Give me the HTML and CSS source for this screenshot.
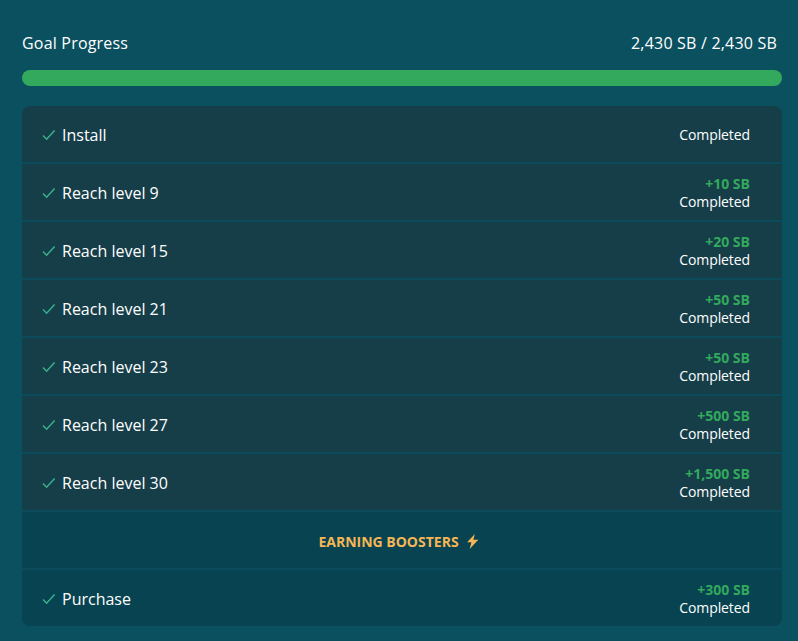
FILE: index.html
```html
<!DOCTYPE html>
<html lang="en">
<head>
    <meta charset="UTF-8">
    <title>Goal Progress</title>
    <link rel="stylesheet" href="styles.css">
</head>
<body>
    <div class="goal-header">
        <span>Goal Progress</span>
        <span>2,430 SB / 2,430 SB</span>
    </div>
    <div class="progress"><div class="progress-fill"></div></div>
    <div class="goal-list">
        <div class="goal-row">
            <div class="goal-name"><svg class="check" viewBox="0 0 14 12"><path d="M1 6.5 L4.6 10.2 L12.6 1.4"/></svg>Install</div>
            <div class="goal-status">Completed</div>
        </div>
        <div class="goal-row">
            <div class="goal-name"><svg class="check" viewBox="0 0 14 12"><path d="M1 6.5 L4.6 10.2 L12.6 1.4"/></svg>Reach level 9</div>
            <div class="goal-status"><div class="reward">+10 SB</div>Completed</div>
        </div>
        <div class="goal-row">
            <div class="goal-name"><svg class="check" viewBox="0 0 14 12"><path d="M1 6.5 L4.6 10.2 L12.6 1.4"/></svg>Reach level 15</div>
            <div class="goal-status"><div class="reward">+20 SB</div>Completed</div>
        </div>
        <div class="goal-row">
            <div class="goal-name"><svg class="check" viewBox="0 0 14 12"><path d="M1 6.5 L4.6 10.2 L12.6 1.4"/></svg>Reach level 21</div>
            <div class="goal-status"><div class="reward">+50 SB</div>Completed</div>
        </div>
        <div class="goal-row">
            <div class="goal-name"><svg class="check" viewBox="0 0 14 12"><path d="M1 6.5 L4.6 10.2 L12.6 1.4"/></svg>Reach level 23</div>
            <div class="goal-status"><div class="reward">+50 SB</div>Completed</div>
        </div>
        <div class="goal-row">
            <div class="goal-name"><svg class="check" viewBox="0 0 14 12"><path d="M1 6.5 L4.6 10.2 L12.6 1.4"/></svg>Reach level 27</div>
            <div class="goal-status"><div class="reward">+500 SB</div>Completed</div>
        </div>
        <div class="goal-row">
            <div class="goal-name"><svg class="check" viewBox="0 0 14 12"><path d="M1 6.5 L4.6 10.2 L12.6 1.4"/></svg>Reach level 30</div>
            <div class="goal-status"><div class="reward">+1,500 SB</div>Completed</div>
        </div>
        <div class="boosters">
            <span>EARNING BOOSTERS</span>
            <svg class="bolt" viewBox="0 0 12 14"><path d="M8.2 0 L1 7.6 L5 7.6 L3.4 14 L11.4 5.4 L6.8 5.4 Z"/></svg>
        </div>
        <div class="goal-row extra">
            <div class="goal-name"><svg class="check" viewBox="0 0 14 12"><path d="M1 6.5 L4.6 10.2 L12.6 1.4"/></svg>Purchase</div>
            <div class="goal-status"><div class="reward">+300 SB</div>Completed</div>
        </div>
    </div>
</body>
</html>
```

FILE: styles.css
```css
html, body {
    height: 100%;
}
body {
    font-family: "Open Sans", "Noto Sans", sans-serif;
    margin: 0;
    padding: 32px 16px 0 22px;
    box-sizing: border-box;
    background: #0b505f;
    color: #fff;
    overflow: hidden;
}
.goal-header {
    display: flex;
    justify-content: space-between;
    padding-right: 5px;
    font-size: 16px;
    line-height: 22px;
    letter-spacing: 0.2px;
}
.progress {
    margin-top: 16px;
    height: 16px;
    border-radius: 8px;
    background: #0a3f4d;
    overflow: hidden;
}
.progress-fill {
    width: 100%;
    height: 100%;
    background: #32a95c;
}
.goal-list {
    margin-top: 20px;
    border-radius: 8px;
    overflow: hidden;
}
.goal-row {
    display: flex;
    justify-content: space-between;
    align-items: center;
    box-sizing: border-box;
    height: 58px;
    padding: 2px 32px 0 20px;
    background: #163e49;
    border-bottom: 2px solid #0b4a5a;
}
.goal-row.extra {
    height: 56px;
    background: #074350;
    border-bottom: none;
}
.goal-name {
    display: flex;
    align-items: center;
    font-size: 16px;
}
.check {
    width: 14px;
    height: 12px;
    margin-right: 6px;
    fill: none;
    stroke: #38b08c;
    stroke-width: 1.5;
}
.goal-status {
    text-align: right;
    font-size: 14px;
    line-height: 18px;
    letter-spacing: -0.1px;
}
.reward {
    color: #32a95c;
    font-weight: 700;
    font-size: 14px;
    letter-spacing: 0;
}
.boosters {
    display: flex;
    justify-content: center;
    align-items: center;
    gap: 7px;
    box-sizing: border-box;
    height: 58px;
    padding: 2px 7px 0 0;
    background: #074350;
    border-bottom: 2px solid #0b4a5a;
    color: #f6b655;
    font-size: 14px;
    font-weight: 700;
}
.bolt {
    width: 13px;
    height: 15px;
    fill: #f6b655;
}
```
